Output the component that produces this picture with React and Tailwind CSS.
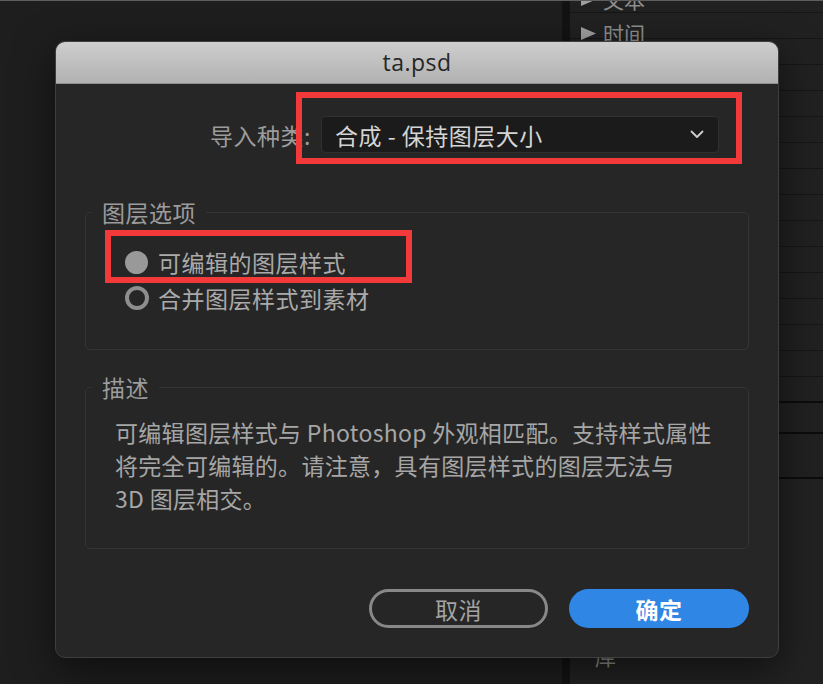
import React from "react";

function Tri() {
  return (
    <svg width="17" height="15" viewBox="0 0 17 15" className="mt-[3px] shrink-0">
      <path d="M1 1 L16 7.5 L1 14 Z" fill="#a0a0a0" />
    </svg>
  );
}

function PanelRow({ children, pt = "pt-0" }) {
  return (
    <div className={`h-[26px] border-b border-[#161616] flex items-start pl-[10px] gap-[6px] text-[21px] leading-[21px] text-[#8e8e8e] ${pt}`}>
      {children}
    </div>
  );
}

export default function App() {
  const emptyRows = Array.from({ length: 13 });
  return (
    <div className="relative w-[823px] h-[684px] overflow-hidden bg-[#1e1e1e] border-t border-[#5e5e5e] font-['Noto_Sans_CJK_SC','Noto_Sans',sans-serif]">
      {/* background app */}
      <div className="flex h-full">
        <div className="w-[562px] bg-[#1e1e1e]" />
        <div className="w-[8px] bg-[#131313]" />
        <div className="flex-1 bg-[#212121] flex flex-col -mt-[14px]">
          <PanelRow pt="pt-[2px]">
            <Tri />
            <span>文本</span>
          </PanelRow>
          <PanelRow pt="pt-[10px]">
            <Tri />
            <span>时间</span>
          </PanelRow>
          {emptyRows.map((_, i) => (
            <div key={i} className="h-[26px] shrink-0 border-b border-[#161616]" />
          ))}
          <div className="h-[26px] shrink-0 border-b-2 border-[#0c0c0c]" />
          <div className="h-[31px] shrink-0 border-b-2 border-[#0c0c0c]" />
          <div className="h-[45px] shrink-0 border-b-2 border-[#0c0c0c]" />
          <div className="flex-1 bg-[#222222] pl-[25px] pt-[167px] text-[21px] leading-[21px] text-[#8e8e8e]">库</div>
        </div>
      </div>

      {/* dialog */}
      <div className="absolute left-[55px] top-[40px] w-[724px] h-[617px] rounded-[10px] bg-[#262626] border border-[#3e3e3e] shadow-[0_12px_40px_rgba(0,0,0,0.55)] overflow-hidden flex flex-col">
        <div className="h-[42px] shrink-0 bg-gradient-to-b from-[#cecece] to-[#b1b1b1] border-b border-[#8e8e8e] flex items-center justify-center">
          <span className="font-['Open_Sans',sans-serif] text-[23px] tracking-[0.5px] text-[#262626]">ta.psd</span>
        </div>

        <div className="flex flex-col px-[29px] pt-[32px] text-[23px] tracking-[0.5px]">
          {/* import kind row */}
          <div className="flex items-center pl-[124px]">
            <span className="w-[112px] pr-[10px] text-right text-[#9c9c9c] leading-[24px] whitespace-nowrap">导入种类:</span>
            <div className="w-[398px] h-[37px] rounded-[5px] bg-[#1b1b1b] border border-[#303030] flex items-center justify-between pl-[13px] pr-[14px]">
              <span className="text-[#d4d4d4] leading-[24px]">合成 - 保持图层大小</span>
              <svg width="14" height="9" viewBox="0 0 14 9">
                <path d="M1.5 1.5 L7 7 L12.5 1.5" fill="none" stroke="#cfcfcf" strokeWidth="1.8" strokeLinecap="round" strokeLinejoin="round" />
              </svg>
            </div>
          </div>

          {/* layer options */}
          <fieldset className="mt-[47px] border border-[#343434] rounded-[5px] pb-[33px]">
            <legend className="ml-[6px] px-[10px] text-[#9c9c9c] leading-[24px]">图层选项</legend>
            <div className="mt-[20px] pl-[39px] flex flex-col">
              <div className="h-[36px] flex items-center">
                <span className="w-[23px] h-[23px] rounded-full bg-[#999999] shrink-0" />
                <span className="ml-[10px] text-[#aaaaaa] leading-[24px]">可编辑的图层样式</span>
              </div>
              <div className="h-[36px] flex items-center">
                <span className="w-[24px] h-[24px] rounded-full border-[4px] border-[#8e8e8e] shrink-0" />
                <span className="ml-[9px] text-[#aaaaaa] leading-[24px]">合并图层样式到素材</span>
              </div>
            </div>
          </fieldset>

          {/* description */}
          <fieldset className="mt-[25px] border border-[#343434] rounded-[5px] pb-[33px]">
            <legend className="ml-[6px] px-[10px] text-[#9c9c9c] leading-[24px]">描述</legend>
            <p className="mt-[17px] pl-[29px] text-[#a6a6a6] leading-[33px] tracking-[0.3px] whitespace-nowrap">
              可编辑图层样式与 Photoshop 外观相匹配。支持样式属性
              <br />
              将完全可编辑的。请注意，具有图层样式的图层无法与
              <br />
              3D 图层相交。
            </p>
          </fieldset>

          {/* buttons */}
          <div className="mt-[40px] flex justify-end gap-[21px]">
            <button className="w-[179px] h-[39px] rounded-full border-[3px] border-[#888888] bg-transparent text-[#a3a3a3] leading-[24px] flex items-center justify-center">
              取消
            </button>
            <button className="w-[180px] h-[39px] rounded-full bg-[#2f86e5] text-white font-semibold leading-[24px] flex items-center justify-center">
              确定
            </button>
          </div>
        </div>

        {/* annotation rectangles */}
        <div className="absolute left-[240px] top-[50px] w-[446px] h-[72px] border-[6px] border-[#f23a3a]" />
        <div className="absolute left-[49px] top-[188px] w-[307px] h-[53px] border-[6px] border-[#f23a3a]" />
      </div>
    </div>
  );
}
